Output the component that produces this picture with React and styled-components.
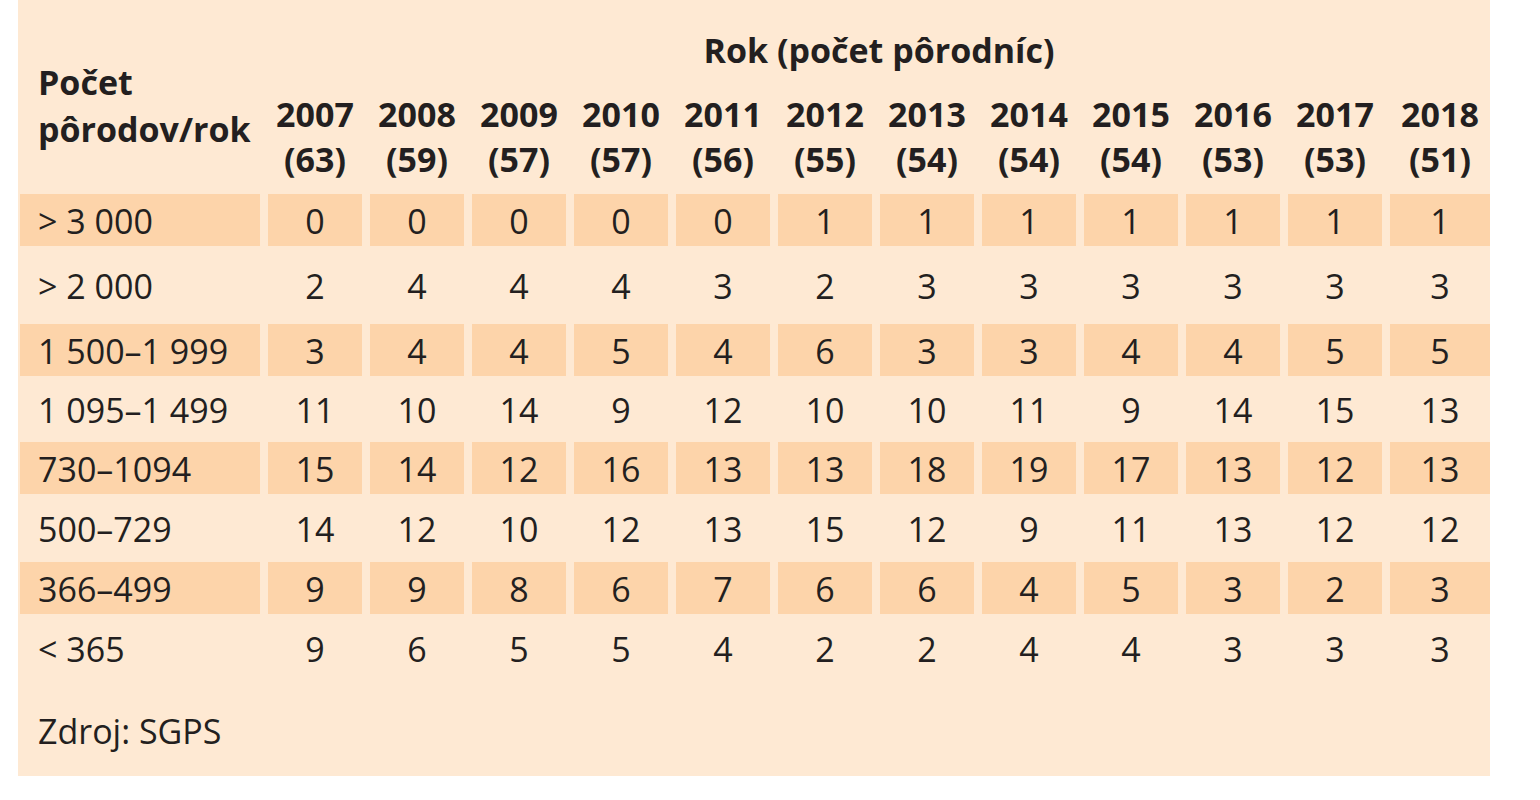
import React from 'react';
import styled, { createGlobalStyle } from 'styled-components';

const GlobalStyle = createGlobalStyle`
	body {
		margin: 0;
		background: #ffffff;
		font-family: "Open Sans", "Noto Sans", sans-serif;
		color: #231f20;
	}
`

const years = [
	['2007', 63], ['2008', 59], ['2009', 57], ['2010', 57], ['2011', 56], ['2012', 55],
	['2013', 54], ['2014', 54], ['2015', 54], ['2016', 53], ['2017', 53], ['2018', 51],
];

const rows = [
	{ label: '> 3 000', height: 52, values: [0, 0, 0, 0, 0, 1, 1, 1, 1, 1, 1, 1] },
	{ label: '> 2 000', height: 62, values: [2, 4, 4, 4, 3, 2, 3, 3, 3, 3, 3, 3] },
	{ label: '1 500–1 999', height: 52, values: [3, 4, 4, 5, 4, 6, 3, 3, 4, 4, 5, 5] },
	{ label: '1 095–1 499', height: 50, values: [11, 10, 14, 9, 12, 10, 10, 11, 9, 14, 15, 13] },
	{ label: '730–1094', height: 52, values: [15, 14, 12, 16, 13, 13, 18, 19, 17, 13, 12, 13] },
	{ label: '500–729', height: 52, values: [14, 12, 10, 12, 13, 15, 12, 9, 11, 13, 12, 12] },
	{ label: '366–499', height: 52, values: [9, 9, 8, 6, 7, 6, 6, 4, 5, 3, 2, 3] },
	{ label: '< 365', height: 52, values: [9, 6, 5, 5, 4, 2, 2, 4, 4, 3, 3, 3] },
];

function App() {
	return (
		<>
			<GlobalStyle />
			<Panel>
				<CornerHead>Počet<br />pôrodov/rok</CornerHead>
				<GroupHead>Rok (počet pôrodníc)</GroupHead>
				{years.map(([year, count]) => (
					<YearHead key={year}>{year}<br />({count})</YearHead>
				))}
				{rows.map((row, i) => (
					<React.Fragment key={row.label}>
						<LabelCell $striped={i % 2 === 0} $h={row.height}>{row.label}</LabelCell>
						{row.values.map((v, j) => (
							<ValueCell key={j} $striped={i % 2 === 0} $h={row.height}>{v}</ValueCell>
						))}
					</React.Fragment>
				))}
				<Source>Zdroj: SGPS</Source>
			</Panel>
		</>
	)
}

export default App;

const Panel = styled.div`
	margin-left: 18px;
	width: 1470px;
	padding: 0 0 19px 2px;
	background: #fee9d3;
	display: grid;
	grid-template-columns: 240px repeat(11, 94px) 100px;
	gap: 8px;
	font-size: 34px;
`

const CornerHead = styled.div`
	grid-row: 1 / span 2;
	padding: 59px 0 0 18px;
	font-weight: 700;
	line-height: 47px;
`

const GroupHead = styled.div`
	grid-column: 2 / -1;
	padding-top: 25px;
	line-height: 50px;
	font-weight: 700;
	text-align: center;
`

const YearHead = styled.div`
	grid-row: 2;
	padding: 9px 0 4px;
	line-height: 45px;
	font-weight: 700;
	text-align: center;
`

const Cell = styled.div`
	box-sizing: border-box;
	height: ${p => p.$h}px;
	padding-top: 2px;
	line-height: ${p => p.$h - 2}px;
	background: ${p => (p.$striped ? '#fdd4aa' : 'transparent')};
	white-space: nowrap;
`

const LabelCell = styled(Cell)`
	padding-left: 18px;
`

const ValueCell = styled(Cell)`
	text-align: center;
`

const Source = styled.div`
	grid-column: 1 / -1;
	padding: 24px 0 0 18px;
	line-height: 50px;
	height: 51px;
`
